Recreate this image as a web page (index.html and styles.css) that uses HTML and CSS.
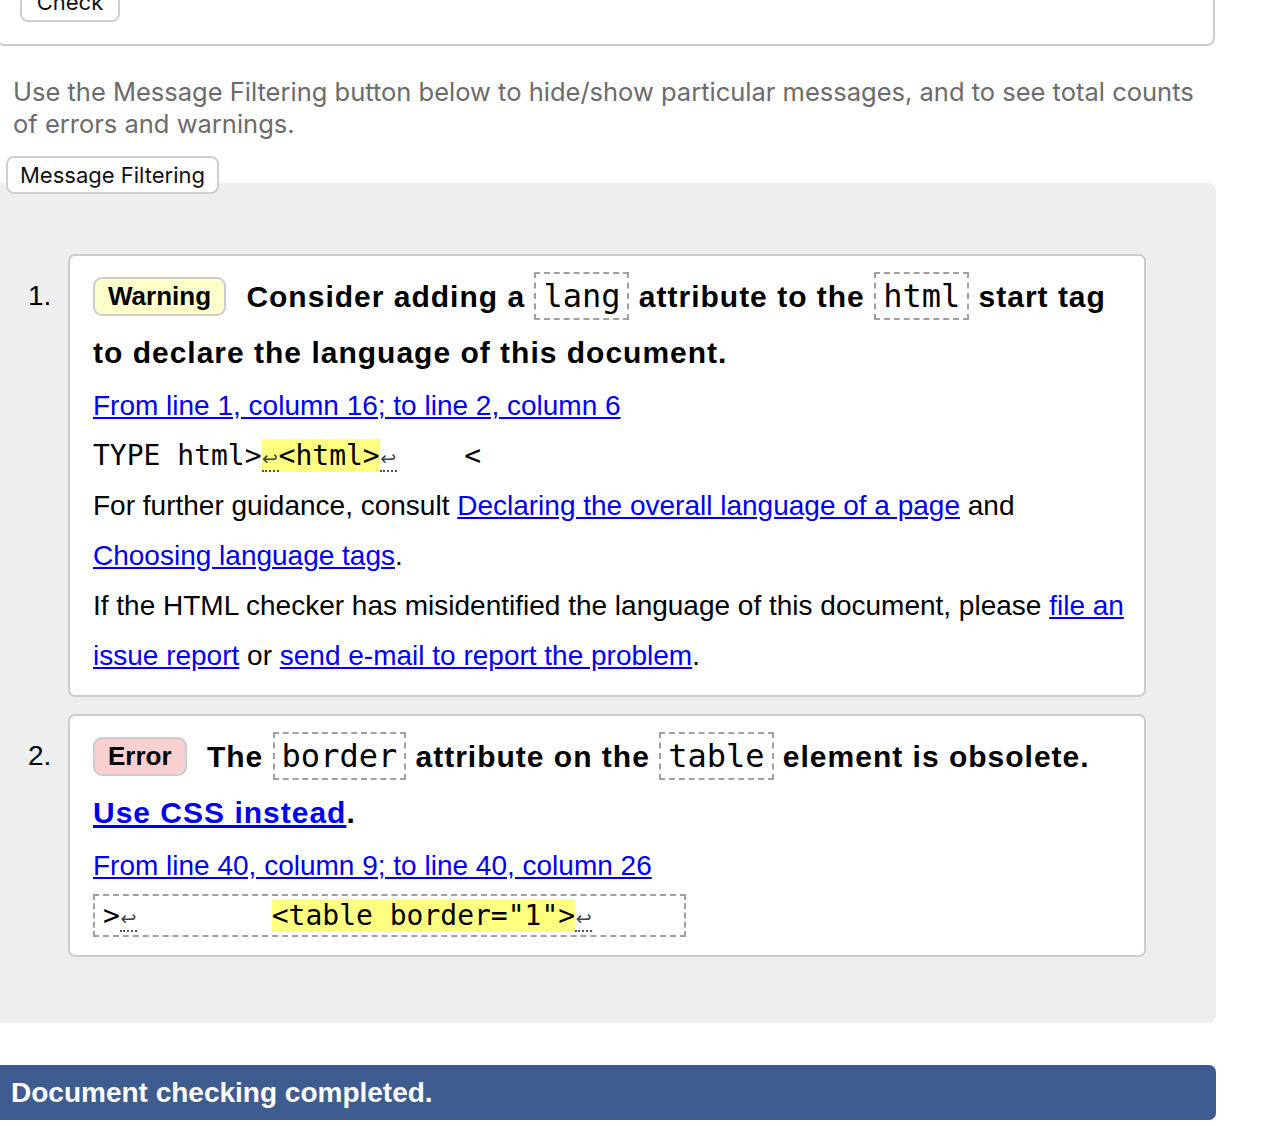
FILE: index.html
```html
<!DOCTYPE html>
<html lang="en">
<head>
<meta charset="utf-8">
<title>Validation results</title>
<link rel="stylesheet" href="styles.css">
</head>
<body>
<div class="form-box"><button class="btn check-btn" type="button">Check</button></div>
<p class="intro">Use the Message Filtering button below to hide/show particular messages, and to see total counts of errors and warnings.</p>
<button class="btn filter-btn" type="button">Message Filtering</button>
<div class="results">
  <ol class="msgs">
    <li class="msg">
      <span class="num">1.</span>
      <div class="card">
        <p class="message"><strong class="badge warn">Warning</strong> <span class="text">Consider adding a <code>lang</code> attribute to the <code>html</code> start tag to declare the language of this document.</span></p>
        <p class="loc"><a href="#">From line 1, column 16; to line 2, column 6</a></p>
        <p class="plain">TYPE html&gt;<mark><span class="lf"><span class="lfg">↩</span></span>&lt;html&gt;</mark><span class="lf"><span class="lfg">↩</span></span>    &lt;</p>
        <p class="info">For further guidance, consult <a href="#">Declaring the overall language of a page</a> and <a href="#">Choosing language tags</a>.</p>
        <p class="info">If the HTML checker has misidentified the language of this document, please <a href="#">file an issue report</a> or <a href="#">send e-mail to report the problem</a>.</p>
      </div>
    </li>
    <li class="msg">
      <span class="num">2.</span>
      <div class="card">
        <p class="message"><strong class="badge err">Error</strong> <span class="text">The <code>border</code> attribute on the <code>table</code> element is obsolete. <a href="#">Use CSS instead</a>.</span></p>
        <p class="loc"><a href="#">From line 40, column 9; to line 40, column 26</a></p>
        <p class="extract-line"><code class="extract">&gt;<span class="lf"><span class="lfg">↩</span></span>        <mark>&lt;table border="1"&gt;</mark><span class="lf"><span class="lfg">↩</span></span>     </code></p>
      </div>
    </li>
  </ol>
</div>
<div class="status">Document checking completed.</div>
</body>
</html>
```

FILE: styles.css
```css
html, body {
  margin: 0;
  padding: 0;
  background: #fff;
}
body {
  font-family: "Liberation Sans", Arial, sans-serif;
  color: #000;
  width: 1270px;
  overflow: hidden;
}
.btn {
  font-family: Inter, "Noto Sans", sans-serif;
  background: #fff;
  color: #111;
  border: 2px solid #cfcfcf;
  border-radius: 8px;
  box-sizing: border-box;
}
.form-box {
  margin-top: -40px;
  margin-left: -4px;
  width: 1219px;
  height: 86px;
  box-sizing: border-box;
  border: 2px solid #cccccc;
  border-radius: 0 0 8px 8px;
  padding: 20px 0 0 22px;
}
.check-btn {
  width: 100px;
  height: 40px;
  font-size: 22px;
  padding: 0;
}
.intro {
  margin: 30px 0 0;
  padding: 0 13px;
  width: 1216px;
  box-sizing: border-box;
  font-family: Inter, "Noto Sans", sans-serif;
  font-size: 25.5px;
  line-height: 32px;
  color: #6b6b6b;
}
.filter-btn {
  display: block;
  position: relative;
  z-index: 1;
  margin: 16px 0 -11px 6px;
  height: 38px;
  padding: 0 12px;
  font-size: 22px;
}
.results {
  background: #eeeeee;
  width: 1216px;
  border-radius: 0 8px 8px 0;
  padding: 71px 0 66px;
  box-sizing: border-box;
}
.msgs {
  list-style: none;
  margin: 0;
  padding: 0 70px 0 0;
}
.msg {
  display: flex;
  align-items: flex-start;
  margin-bottom: 17px;
}
.msg:last-child {
  margin-bottom: 0;
}
.num {
  flex: none;
  width: 68px;
  box-sizing: border-box;
  padding: 14px 0 0 28px;
  font-size: 28px;
  line-height: 56px;
}
.card {
  flex: 1;
  background: #fff;
  border: 2px solid #cccccc;
  border-radius: 7px;
  padding: 12px 20px 14px 23px;
}
.card p {
  margin: 0;
}
.message {
  font-size: 30px;
  line-height: 56px;
  font-weight: bold;
}
.message .text {
  letter-spacing: 1px;
}
.badge {
  display: inline-block;
  font-size: 26px;
  line-height: 31px;
  padding: 2px 13px 2px;
  border: 2px solid #cccccc;
  border-radius: 9px;
  margin-right: 12px;
  letter-spacing: 0;
  vertical-align: 2px;
}
.warn {
  background: #ffffcc;
}
.err {
  background: #f8d0d0;
}
code {
  font-family: "DejaVu Sans Mono", monospace;
  font-weight: normal;
  letter-spacing: 0;
}
.message code {
  font-size: 32px;
  border: 2px dashed #a0a0a0;
  padding: 3px 7px;
}
a {
  color: #0000ee;
  text-decoration: underline;
  text-underline-offset: 2px;
}
.loc, .info, .extract-line {
  font-size: 28px;
  line-height: 50px;
}
.extract, .plain {
  font-family: "DejaVu Sans Mono", monospace;
  font-size: 28px;
  white-space: pre;
}
.plain {
  line-height: 50px;
}
.extract {
  display: inline-block;
  line-height: 37px;
  border: 2px dashed #a0a0a0;
  padding: 1px 8px 1px;
  vertical-align: middle;
  position: relative;
  top: -2px;
}
mark {
  background: #ffff80;
  color: #000;
}
.lf {
  display: inline-block;
  width: 17px;
  text-align: center;
  line-height: 1;
  border-bottom: 2px dotted #555;
}
.lfg {
  font-family: "DejaVu Sans", sans-serif;
  font-size: 19px;
  color: #444;
}
.status {
  margin-top: 42px;
  width: 1216px;
  height: 55px;
  box-sizing: border-box;
  background: #3e5c8f;
  color: #fff;
  font-weight: bold;
  font-size: 28px;
  line-height: 55px;
  padding-left: 11px;
  border-radius: 0 7px 7px 0;
}
```
